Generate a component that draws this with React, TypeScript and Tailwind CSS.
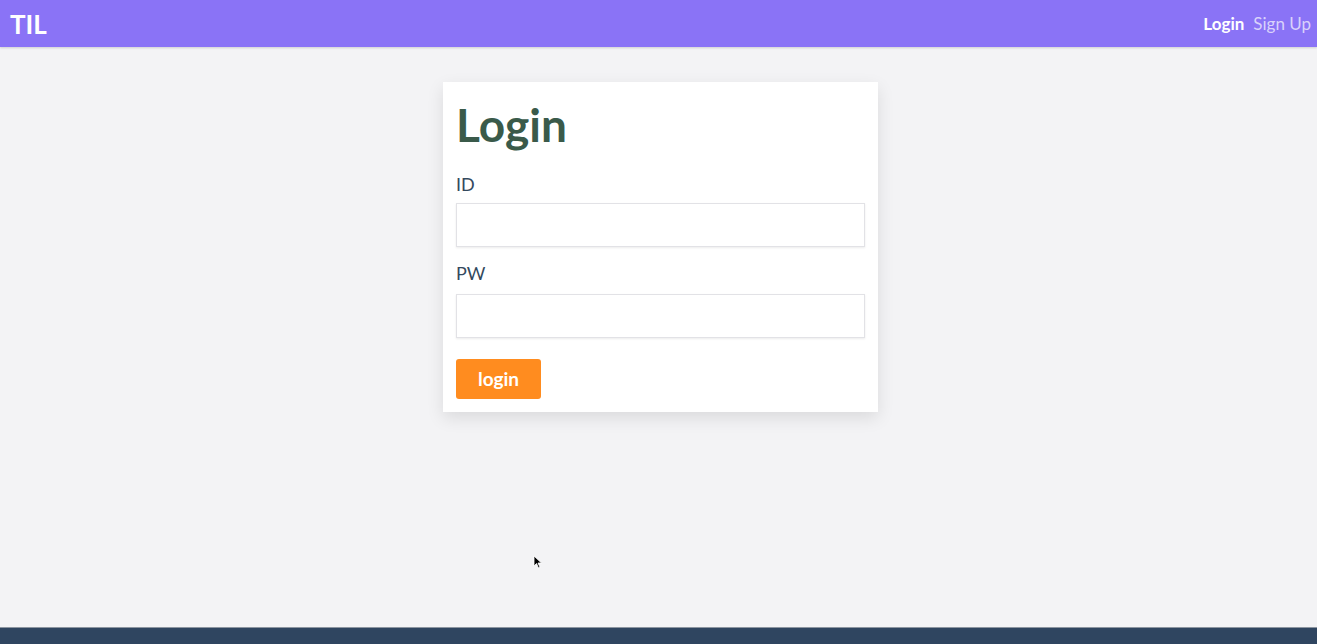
import React from "react";

export default function App() {
  const font = { fontFamily: '"Lato", "Noto Sans", sans-serif' };
  return (
    <div className="relative flex h-[644px] w-full flex-col bg-[#f3f3f5]" style={font}>
      <header className="flex h-[47px] shrink-0 items-center justify-between bg-[#8a73f6] pl-[10px] pr-[6px] shadow-[0_1px_2px_rgba(0,0,0,0.15)]">
        <div className="text-[26px] font-bold leading-none text-white">TIL</div>
        <nav className="flex items-center gap-[9px] text-[17px]">
          <span className="font-bold text-white">Login</span>
          <span className="text-[#d9d2fb]">Sign Up</span>
        </nav>
      </header>
      <main className="flex flex-1 justify-center pl-[4px] pt-[35px]">
        <div className="h-fit w-[435px] bg-white px-[13px] pb-[13px] pt-[14px] shadow-[0_6px_16px_rgba(0,0,0,0.1)]">
          <h1 className="text-[46px] font-bold leading-[58px] text-[#3a5a4a]">Login</h1>
          <label className="mt-[18px] block text-[18px] leading-[24px] text-[#34495e]">ID</label>
          <input className="mt-[7px] block h-[44px] w-full border border-[#e2e2e6] bg-white shadow-[0_1px_2px_rgba(0,0,0,0.08)] outline-none" />
          <label className="mt-[14px] block text-[18px] leading-[24px] text-[#34495e]">PW</label>
          <input type="password" className="mt-[9px] block h-[44px] w-full border border-[#e2e2e6] bg-white shadow-[0_1px_2px_rgba(0,0,0,0.08)] outline-none" />
          <button className="mt-[21px] h-[40px] w-[85px] rounded-[3px] bg-[#ff8c1f] text-[19px] font-bold text-white">login</button>
        </div>
      </main>
      <footer className="h-[17px] shrink-0 border-t border-[#8c95a0] bg-[#2f4560]" />
      <svg className="absolute left-[533px] top-[555px]" width="10" height="14" viewBox="0 0 10 14">
        <path d="M1 1 L1 11 L3.5 8.5 L5.5 13 L7 12.3 L5 8 L8.5 8 Z" fill="#000" stroke="#fff" strokeWidth="0.8" />
      </svg>
    </div>
  );
}
